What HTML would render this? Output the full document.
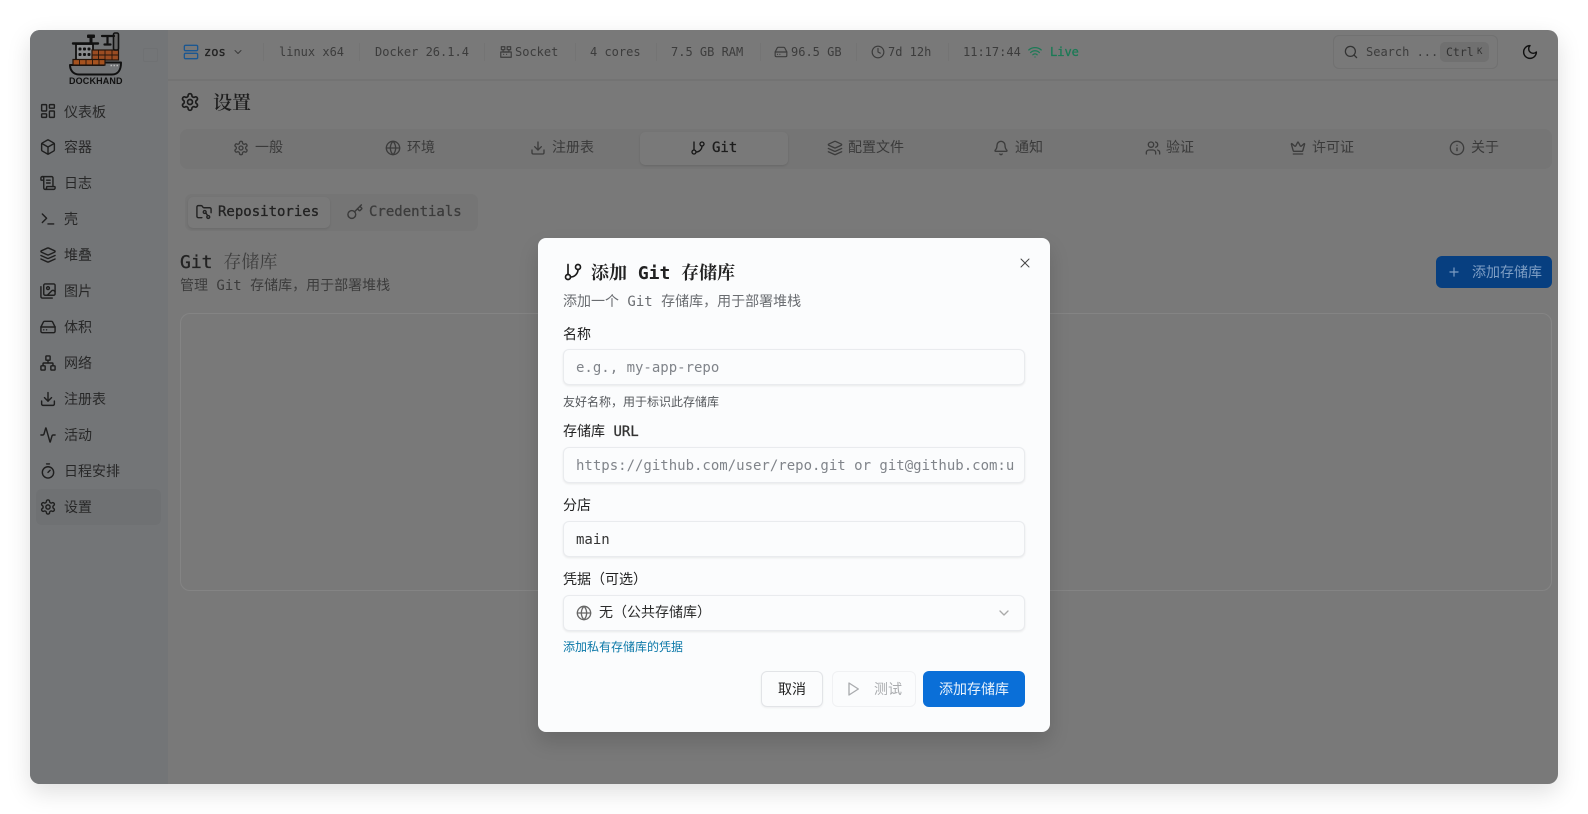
<!DOCTYPE html>
<html lang="zh"><head><meta charset="utf-8"><title>Dockhand</title>
<style>
html,body{margin:0;padding:0;background:#fff;width:1588px;height:814px;overflow:hidden}
body{position:relative;font-family:"DejaVu Sans Mono","Noto Sans CJK SC",monospace;font-size:14px;color:#2e2e2e}
.a{position:absolute;box-sizing:border-box}
.t{position:absolute;white-space:pre;transform:translateY(-50%);line-height:20px}
.s{font-family:"Liberation Sans","Noto Sans CJK SC",sans-serif}
.i{position:absolute;fill:none;stroke:currentColor;stroke-width:2;stroke-linecap:round;stroke-linejoin:round;transform:translate(-50%,-50%)}
.serif{font-family:"DejaVu Sans Mono","Noto Serif CJK SC",serif}
.h{font-size:12px;color:#3c3c3c}
.m{-webkit-text-stroke:.3px currentColor}
.sep{position:absolute;top:43px;height:18px;width:1px;background:#747474}
.inp{position:absolute;box-sizing:border-box;left:563px;width:462px;height:36px;border:1px solid #e9ebee;border-radius:6px;background:#fbfcfd;box-shadow:0 1px 2px rgba(0,0,0,.08)}
</style></head><body>
<svg width="0" height="0" style="position:absolute"><defs>
<symbol id="dash" viewBox="0 0 24 24"><rect x="3" y="3" width="7" height="9" rx="1"/><rect x="14" y="3" width="7" height="5" rx="1"/><rect x="14" y="12" width="7" height="9" rx="1"/><rect x="3" y="16" width="7" height="5" rx="1"/></symbol>
<symbol id="box" viewBox="0 0 24 24"><path d="M21 8a2 2 0 0 0-1-1.730l-7-4a2 2 0 0 0-2 0l-7 4A2 2 0 0 0 3 8v8a2 2 0 0 0 1 1.730l7 4a2 2 0 0 0 2 0l7-4A2 2 0 0 0 21 16Z"/><path d="m3.300 7 8.700 5 8.700-5"/><path d="M12 22V12"/></symbol>
<symbol id="scroll" viewBox="0 0 24 24"><path d="M15 12h-5"/><path d="M15 8h-5"/><path d="M19 17V5a2 2 0 0 0-2-2H4"/><path d="M8 21h12a2 2 0 0 0 2-2v-1a1 1 0 0 0-1-1H11a1 1 0 0 0-1 1v1a2 2 0 1 1-4 0V5a2 2 0 1 0-4 0v2a1 1 0 0 0 1 1h3"/></symbol>
<symbol id="term" viewBox="0 0 24 24"><path d="m4 17 6-6-6-6"/><path d="M12 19h8"/></symbol>
<symbol id="layers" viewBox="0 0 24 24"><path d="M12.830 2.180a2 2 0 0 0-1.660 0L2.600 6.080a1 1 0 0 0 0 1.830l8.580 3.910a2 2 0 0 0 1.660 0l8.580-3.900a1 1 0 0 0 0-1.830Z"/><path d="m22 17.650-9.170 4.160a2 2 0 0 1-1.660 0L2 17.650"/><path d="m22 12.650-9.170 4.160a2 2 0 0 1-1.660 0L2 12.650"/></symbol>
<symbol id="images" viewBox="0 0 24 24"><path d="M18 22H4a2 2 0 0 1-2-2V6"/><path d="m22 13-1.296-1.296a2.410 2.410 0 0 0-3.408 0L11 18"/><circle cx="12" cy="8" r="2"/><rect x="6" y="2" width="16" height="16" rx="2"/></symbol>
<symbol id="hd" viewBox="0 0 24 24"><path d="M22 12H2"/><path d="M5.450 5.110 2 12v6a2 2 0 0 0 2 2h16a2 2 0 0 0 2-2v-6l-3.450-6.890A2 2 0 0 0 16.760 4H7.240a2 2 0 0 0-1.790 1.110z"/><path d="M6 16h.01"/><path d="M10 16h.01"/></symbol>
<symbol id="net" viewBox="0 0 24 24"><rect x="16" y="16" width="6" height="6" rx="1"/><rect x="2" y="16" width="6" height="6" rx="1"/><rect x="9" y="2" width="6" height="6" rx="1"/><path d="M5 16v-3a1 1 0 0 1 1-1h12a1 1 0 0 1 1 1v3"/><path d="M12 12V8"/></symbol>
<symbol id="dl" viewBox="0 0 24 24"><path d="M21 15v4a2 2 0 0 1-2 2H5a2 2 0 0 1-2-2v-4"/><path d="m7 10 5 5 5-5"/><path d="M12 15V3"/></symbol>
<symbol id="act" viewBox="0 0 24 24"><path d="M22 12h-2.480a2 2 0 0 0-1.930 1.460l-2.350 8.360a.25.25 0 0 1-.48 0L9.240 2.180a.25.25 0 0 0-.48 0l-2.350 8.360A2 2 0 0 1 4.490 12H2"/></symbol>
<symbol id="timer" viewBox="0 0 24 24"><path d="M10 2h4"/><path d="m12 14 3-3"/><circle cx="12" cy="14" r="8"/></symbol>
<symbol id="gear" viewBox="0 0 24 24"><path d="M12.220 2h-.44a2 2 0 0 0-2 2v.18a2 2 0 0 1-1 1.730l-.43.25a2 2 0 0 1-2 0l-.15-.08a2 2 0 0 0-2.730.73l-.22.38a2 2 0 0 0 .73 2.730l.15.1a2 2 0 0 1 1 1.720v.51a2 2 0 0 1-1 1.740l-.15.09a2 2 0 0 0-.73 2.730l.22.38a2 2 0 0 0 2.730.73l.15-.08a2 2 0 0 1 2 0l.43.25a2 2 0 0 1 1 1.730V20a2 2 0 0 0 2 2h.44a2 2 0 0 0 2-2v-.18a2 2 0 0 1 1-1.730l.43-.25a2 2 0 0 1 2 0l.15.08a2 2 0 0 0 2.730-.73l.22-.39a2 2 0 0 0-.73-2.730l-.15-.08a2 2 0 0 1-1-1.740v-.5a2 2 0 0 1 1-1.740l.15-.09a2 2 0 0 0 .73-2.730l-.22-.38a2 2 0 0 0-2.730-.73l-.15.08a2 2 0 0 1-2 0l-.43-.25a2 2 0 0 1-1-1.730V4a2 2 0 0 0-2-2z"/><circle cx="12" cy="12" r="3"/></symbol>
<symbol id="globe" viewBox="0 0 24 24"><circle cx="12" cy="12" r="10"/><path d="M12 2a14.500 14.500 0 0 0 0 20 14.500 14.500 0 0 0 0-20"/><path d="M2 12h20"/></symbol>
<symbol id="git" viewBox="0 0 24 24"><path d="M6 3v12"/><circle cx="18" cy="6" r="3"/><circle cx="6" cy="18" r="3"/><path d="M18 9a9 9 0 0 1-9 9"/></symbol>
<symbol id="bell" viewBox="0 0 24 24"><path d="M10.268 21a2 2 0 0 0 3.464 0"/><path d="M3.262 15.326A1 1 0 0 0 4 17h16a1 1 0 0 0 .74-1.673C19.410 13.956 18 12.499 18 8A6 6 0 0 0 6 8c0 4.499-1.411 5.956-2.738 7.326"/></symbol>
<symbol id="users" viewBox="0 0 24 24"><path d="M16 21v-2a4 4 0 0 0-4-4H6a4 4 0 0 0-4 4v2"/><circle cx="9" cy="7" r="4"/><path d="M22 21v-2a4 4 0 0 0-3-3.870"/><path d="M16 3.130a4 4 0 0 1 0 7.750"/></symbol>
<symbol id="crown" viewBox="0 0 24 24"><path d="M11.562 3.266a.5.5 0 0 1 .876 0L15.390 8.870a1 1 0 0 0 1.516.294L21.183 5.500a.5.5 0 0 1 .798.519l-2.834 10.246a1 1 0 0 1-.956.734H5.810a1 1 0 0 1-.957-.734L2.020 6.020a.5.5 0 0 1 .798-.519l4.276 3.664a1 1 0 0 0 1.516-.294z"/><path d="M5 21h14"/></symbol>
<symbol id="info" viewBox="0 0 24 24"><circle cx="12" cy="12" r="10"/><path d="M12 16v-4"/><path d="M12 8h.01"/></symbol>
<symbol id="clock" viewBox="0 0 24 24"><circle cx="12" cy="12" r="10"/><path d="M12 6v6l4 2"/></symbol>
<symbol id="wifi" viewBox="0 0 24 24"><path d="M12 20h.01"/><path d="M2 8.820a15 15 0 0 1 20 0"/><path d="M5 12.859a10 10 0 0 1 14 0"/><path d="M8.500 16.429a5 5 0 0 1 7 0"/></symbol>
<symbol id="search" viewBox="0 0 24 24"><circle cx="11" cy="11" r="8"/><path d="m21 21-4.300-4.300"/></symbol>
<symbol id="moon" viewBox="0 0 24 24"><path d="M12 3a6 6 0 0 0 9 9 9 9 0 1 1-9-9Z"/></symbol>
<symbol id="server" viewBox="0 0 24 24"><rect x="2" y="2" width="20" height="8" rx="2"/><rect x="2" y="14" width="20" height="8" rx="2"/></symbol>
<symbol id="plus" viewBox="0 0 24 24"><path d="M5 12h14"/><path d="M12 5v14"/></symbol>
<symbol id="x" viewBox="0 0 24 24"><path d="M18 6 6 18"/><path d="m6 6 12 12"/></symbol>
<symbol id="chev" viewBox="0 0 24 24"><path d="m6 9 6 6 6-6"/></symbol>
<symbol id="play" viewBox="0 0 24 24"><path d="M6 3l14 9-14 9z"/></symbol>
<symbol id="key" viewBox="0 0 24 24"><path d="m15.500 7.500 2.300 2.300a1 1 0 0 0 1.400 0l2.100-2.100a1 1 0 0 0 0-1.400L19 4"/><path d="m21 2-9.600 9.600"/><circle cx="7.500" cy="15.500" r="5.500"/></symbol>
<symbol id="folder" viewBox="0 0 24 24"><path d="M9 20H4a2 2 0 0 1-2-2V5a2 2 0 0 1 2-2h3.900a2 2 0 0 1 1.690.9l.81 1.200a2 2 0 0 0 1.670.9H20a2 2 0 0 1 2 2v5"/><circle cx="13" cy="12" r="2"/><circle cx="18" cy="19" r="2"/><path d="M15 14l2 3"/></symbol>
<symbol id="sock" viewBox="0 0 24 24"><path d="M4 3h6v5H4z"/><path d="M14 3h6v5h-6z"/><path d="M7 8v4h10V8"/><path d="M3 12h18v9H3z"/><path d="M8 16h.01"/><path d="M13 16h.01"/></symbol>
</defs></svg>

<!-- window -->
<div class="a" style="left:30px;top:30px;width:1528px;height:754px;border-radius:10px;background:#797979;box-shadow:0 8px 24px rgba(0,0,0,.13);overflow:hidden">
  <div class="a" style="left:0;top:0;width:138px;height:754px;background:#737577"></div>
  <div class="a" style="left:138px;top:49px;width:1390px;height:2px;background:#737373"></div>
</div>

<!-- logo -->
<svg class="a" style="left:60px;top:30px" width="72" height="50" viewBox="60 30 72 50">
  <path d="M70 65H104V62.500H121C121 70 118 74.500 112 74.500H79C73 74.500 70 70 70 65Z" fill="#737577" stroke="#111" stroke-width="2" stroke-linejoin="round"/>
  <rect x="76" y="44" width="17" height="16" fill="#8a8c8e" stroke="#111" stroke-width="1.800"/>
  <path d="M73 43.500H98" stroke="#111" stroke-width="2.400" stroke-linecap="round"/>
  <rect x="87" y="34.500" width="8" height="3.500" rx="1" fill="#111"/><path d="M91 38v5" stroke="#111" stroke-width="3"/>
  <g fill="#111"><rect x="78.500" y="47.500" width="3" height="3" rx="1"/><rect x="83" y="47.500" width="3" height="3" rx="1"/><rect x="87.500" y="47.500" width="3" height="3" rx="1"/><rect x="78.500" y="53" width="3" height="3" rx="1"/><rect x="83" y="53" width="3" height="3" rx="1"/><rect x="87.500" y="53" width="3" height="3" rx="1"/></g>
  <rect x="92" y="50" width="26.500" height="10" fill="#9b4c22" stroke="#24150c" stroke-width="1.200"/>
  <path d="M98.500 50v10M105 50v10M112 50v10M92 55h26.500" stroke="#24150c" stroke-width=".9"/>
  <rect x="73" y="59.500" width="32" height="5.500" fill="#a5521f" stroke="#24150c" stroke-width="1.200"/>
  <path d="M79.500 59.500v5.500M86 59.500v5.500M92.500 59.500v5.500M99 59.500v5.500" stroke="#24150c" stroke-width=".9"/>
  <rect x="113.500" y="33" width="5" height="17" rx="1.500" fill="#666" stroke="#111" stroke-width="1.600"/>
  <path d="M102 36H114M107.500 36v7M104.500 44.500h6" stroke="#111" stroke-width="2.200" fill="none" stroke-linecap="round"/>
  <path d="M110.500 65.500h1.500M113.500 65.500h1.500M116.500 65.500h1.500" stroke="#bbb" stroke-width="1.400"/>
</svg>
<div class="t s" style="left:69px;top:81px;font-size:9px;font-weight:bold;color:#111;line-height:10px;letter-spacing:.15px">DOCKHAND</div>
<div class="a" style="left:143px;top:48px;width:15px;height:14px;border:1px solid #6f7173;border-radius:2px"></div>

<!-- sidebar -->
<div class="a" style="left:36px;top:489px;width:125px;height:36px;border-radius:6px;background:#6f7173"></div>
<svg class="i" style="left:48px;top:111px;color:#1f1f1f" width="17" height="17"><use href="#dash"/></svg><div class="t s" style="left:64px;top:111.500px;color:#282828">仪表板</div>
<svg class="i" style="left:48px;top:147px;color:#1f1f1f" width="17" height="17"><use href="#box"/></svg><div class="t s" style="left:64px;top:147px;color:#282828">容器</div>
<svg class="i" style="left:48px;top:183px;color:#1f1f1f" width="17" height="17"><use href="#scroll"/></svg><div class="t s" style="left:64px;top:183px;color:#282828">日志</div>
<svg class="i" style="left:48px;top:219px;color:#1f1f1f" width="17" height="17"><use href="#term"/></svg><div class="t s" style="left:64px;top:219px;color:#282828">壳</div>
<svg class="i" style="left:48px;top:255px;color:#1f1f1f" width="17" height="17"><use href="#layers"/></svg><div class="t s" style="left:64px;top:255px;color:#282828">堆叠</div>
<svg class="i" style="left:48px;top:291px;color:#1f1f1f" width="17" height="17"><use href="#images"/></svg><div class="t s" style="left:64px;top:291px;color:#282828">图片</div>
<svg class="i" style="left:48px;top:327px;color:#1f1f1f" width="17" height="17"><use href="#hd"/></svg><div class="t s" style="left:64px;top:327px;color:#282828">体积</div>
<svg class="i" style="left:48px;top:363px;color:#1f1f1f" width="17" height="17"><use href="#net"/></svg><div class="t s" style="left:64px;top:363px;color:#282828">网络</div>
<svg class="i" style="left:48px;top:399px;color:#1f1f1f" width="17" height="17"><use href="#dl"/></svg><div class="t s" style="left:64px;top:399px;color:#282828">注册表</div>
<svg class="i" style="left:48px;top:435px;color:#1f1f1f" width="17" height="17"><use href="#act"/></svg><div class="t s" style="left:64px;top:435px;color:#282828">活动</div>
<svg class="i" style="left:48px;top:471px;color:#1f1f1f" width="17" height="17"><use href="#timer"/></svg><div class="t s" style="left:64px;top:471px;color:#282828">日程安排</div>
<svg class="i" style="left:48px;top:507px;color:#1f1f1f" width="17" height="17"><use href="#gear"/></svg><div class="t s" style="left:64px;top:507px;color:#282828">设置</div>

<!-- header -->
<svg class="i" style="left:191px;top:52px;color:#1b5791" width="16" height="16"><use href="#server"/></svg>
<div class="t h m" style="left:204px;top:52px;color:#222">zos</div>
<svg class="i" style="left:238px;top:52px;color:#3a3a3a" width="12" height="12"><use href="#chev"/></svg>
<div class="sep" style="left:263px"></div>
<div class="t h" style="left:279px;top:52px">linux x64</div>
<div class="sep" style="left:359px"></div>
<div class="t h" style="left:375px;top:52px">Docker 26.1.4</div>
<div class="sep" style="left:484px"></div>
<svg class="i" style="left:506px;top:52px;color:#3c3c3c" width="14" height="14"><use href="#sock"/></svg>
<div class="t h" style="left:515px;top:52px">Socket</div>
<div class="sep" style="left:575px"></div>
<div class="t h" style="left:590px;top:52px">4 cores</div>
<div class="sep" style="left:656px"></div>
<div class="t h" style="left:671px;top:52px">7.5 GB RAM</div>
<div class="sep" style="left:760px"></div>
<svg class="i" style="left:781px;top:52px;color:#3c3c3c" width="14" height="14"><use href="#hd"/></svg>
<div class="t h" style="left:791px;top:52px">96.5 GB</div>
<div class="sep" style="left:856px"></div>
<svg class="i" style="left:878px;top:52px;color:#3c3c3c" width="14" height="14"><use href="#clock"/></svg>
<div class="t h" style="left:888px;top:52px">7d 12h</div>
<div class="sep" style="left:948px"></div>
<div class="t h" style="left:963px;top:52px">11:17:44</div>
<svg class="i" style="left:1035px;top:52px;color:#1c7a56" width="15" height="15"><use href="#wifi"/></svg>
<div class="t h m" style="left:1050px;top:52px;color:#1c7a56">Live</div>

<div class="a" style="left:1333px;top:35px;width:165px;height:34px;border:1px solid #717171;border-radius:6px"></div>
<svg class="i" style="left:1351px;top:52px;color:#333" width="15" height="15"><use href="#search"/></svg>
<div class="t h" style="left:1366px;top:52px">Search ...</div>
<div class="a" style="left:1440px;top:42px;width:49px;height:20px;border-radius:5px;background:#707070"></div>
<div class="t" style="left:1446px;top:52px;font-size:11.500px;color:#333">Ctrl</div>
<div class="t" style="left:1477px;top:52px;font-size:9px;color:#333">K</div>
<svg class="i" style="left:1530px;top:52px;color:#111" width="17" height="17"><use href="#moon"/></svg>

<!-- title -->
<svg class="i" style="left:190px;top:102px;color:#1c1c1c" width="20" height="20"><use href="#gear"/></svg>
<div class="t serif" style="left:213px;top:103px;font-size:19px;line-height:24px;color:#1e1e1e;font-weight:600">设置</div>

<!-- tabs -->
<div class="a" style="left:180px;top:129px;width:1372px;height:40px;border-radius:8px;background:#757575"></div>
<div class="a" style="left:640px;top:132px;width:148px;height:33px;border-radius:5px;background:#797979;box-shadow:0 1px 2px rgba(0,0,0,.12)"></div>
<svg class="i" style="left:241px;top:148px;color:#3c3c3c" width="16" height="16"><use href="#gear"/></svg><div class="t s" style="left:255px;top:147px;color:#3a3a3a">一般</div>
<svg class="i" style="left:393px;top:148px;color:#3c3c3c" width="16" height="16"><use href="#globe"/></svg><div class="t s" style="left:407px;top:147px;color:#3a3a3a">环境</div>
<svg class="i" style="left:538px;top:148px;color:#3c3c3c" width="16" height="16"><use href="#dl"/></svg><div class="t s" style="left:552px;top:147px;color:#3a3a3a">注册表</div>
<svg class="i" style="left:698px;top:148px;color:#161616" width="16" height="16"><use href="#git"/></svg><div class="t m" style="left:712px;top:148px;color:#1c1c1c">Git</div>
<svg class="i" style="left:835px;top:148px;color:#3c3c3c" width="16" height="16"><use href="#layers"/></svg><div class="t s" style="left:848px;top:147px;color:#3a3a3a">配置文件</div>
<svg class="i" style="left:1001px;top:148px;color:#3c3c3c" width="16" height="16"><use href="#bell"/></svg><div class="t s" style="left:1015px;top:147px;color:#3a3a3a">通知</div>
<svg class="i" style="left:1153px;top:148px;color:#3c3c3c" width="16" height="16"><use href="#users"/></svg><div class="t s" style="left:1166px;top:147px;color:#3a3a3a">验证</div>
<svg class="i" style="left:1298px;top:148px;color:#3c3c3c" width="16" height="16"><use href="#crown"/></svg><div class="t s" style="left:1312px;top:147px;color:#3a3a3a">许可证</div>
<svg class="i" style="left:1457px;top:148px;color:#3c3c3c" width="16" height="16"><use href="#info"/></svg><div class="t s" style="left:1471px;top:147px;color:#3a3a3a">关于</div>

<!-- subtabs -->
<div class="a" style="left:185px;top:194px;width:293px;height:37px;border-radius:7px;background:#757575"></div>
<div class="a" style="left:188px;top:197px;width:142px;height:31px;border-radius:5px;background:#797979;box-shadow:0 1px 2px rgba(0,0,0,.1)"></div>
<svg class="i" style="left:204px;top:212px;color:#222" width="17" height="17"><use href="#folder"/></svg>
<div class="t m" style="left:218px;top:212px;color:#222">Repositories</div>
<svg class="i" style="left:355px;top:212px;color:#3a3a3a" width="17" height="17"><use href="#key"/></svg>
<div class="t m" style="left:369px;top:212px;color:#3c3c3c">Credentials</div>

<!-- section head -->
<div class="t serif" style="left:180px;top:263px;font-size:18px;line-height:24px;color:#222"><span class="m">Git</span> <span style="color:#3f3f3f">存储库</span></div>
<div class="t" style="left:180px;top:286px;color:#3c3c3c">管理 Git 存储库，用于部署堆栈</div>
<div class="a" style="left:1436px;top:256px;width:116px;height:32px;border-radius:6px;background:#073f80"></div>
<svg class="i" style="left:1454px;top:272px;color:#7e9ec4" width="14" height="14"><use href="#plus"/></svg>
<div class="t s" style="left:1472px;top:272px;color:#7e9ec4">添加存储库</div>

<!-- card -->
<div class="a" style="left:180px;top:313px;width:1372px;height:278px;border:1px solid #848484;border-radius:10px"></div>

<!-- modal -->
<div class="a" style="left:538px;top:238px;width:512px;height:494px;border-radius:8px;background:#fbfcfd;box-shadow:0 10px 20px rgba(0,0,0,.14)"></div>
<svg class="i" style="left:573px;top:272px;color:#1a1a1a" width="20" height="20"><use href="#git"/></svg>
<div class="t serif" style="left:591px;top:274px;font-size:18px;line-height:24px;font-weight:bold;color:#222">添加 Git 存储库</div>
<svg class="i" style="left:1025px;top:263px;color:#444;stroke-width:1.500" width="16" height="16"><use href="#x"/></svg>
<div class="t" style="left:563px;top:302px;color:#6a6d71">添加一个 Git 存储库，用于部署堆栈</div>

<div class="t s" style="left:563px;top:334px;color:#222">名称</div>
<div class="inp" style="top:349px"></div>
<div class="t" style="left:576px;top:368px;color:#80848a">e.g., my-app-repo</div>
<div class="t s" style="left:563px;top:402px;font-size:12px;color:#55585c">友好名称，用于标识此存储库</div>

<div class="t" style="left:563px;top:432px;color:#222">存储库 <span class="m" style="color:#333">URL</span></div>
<div class="inp" style="top:447px"></div>
<div class="t" style="left:576px;top:466px;color:#80848a">https://github.com/user/repo.git or git@github.com:u</div>

<div class="t s" style="left:563px;top:505px;color:#222">分店</div>
<div class="inp" style="top:521px"></div>
<div class="t" style="left:576px;top:540px;color:#333">main</div>

<div class="t s" style="left:563px;top:579px;color:#222">凭据（可选）</div>
<div class="inp" style="top:595px"></div>
<svg class="i" style="left:584px;top:613px;color:#666" width="16" height="16"><use href="#globe"/></svg>
<div class="t s" style="left:599px;top:612px;color:#2b2b2b">无（公共存储库）</div>
<svg class="i" style="left:1004px;top:613px;color:#aaa" width="16" height="16"><use href="#chev"/></svg>
<div class="t s" style="left:563px;top:647px;font-size:12px;color:#0b78a8">添加私有存储库的凭据</div>

<div class="a" style="left:761px;top:671px;width:62px;height:36px;border:1px solid #e2e4e7;border-radius:6px;background:#fbfcfd;box-shadow:0 1px 2px rgba(0,0,0,.06)"></div>
<div class="t s" style="left:778px;top:689px;color:#222">取消</div>
<div class="a" style="left:832px;top:671px;width:84px;height:36px;border:1px solid #f0f1f3;border-radius:6px"></div>
<svg class="i" style="left:853px;top:689px;color:#a9abae" width="16" height="16"><use href="#play"/></svg>
<div class="t s" style="left:874px;top:689px;color:#a9abae">测试</div>
<div class="a" style="left:923px;top:671px;width:102px;height:36px;border-radius:6px;background:#0a6fd8"></div>
<div class="t s" style="left:939px;top:689px;color:#eaf3fc">添加存储库</div>
</body></html>
